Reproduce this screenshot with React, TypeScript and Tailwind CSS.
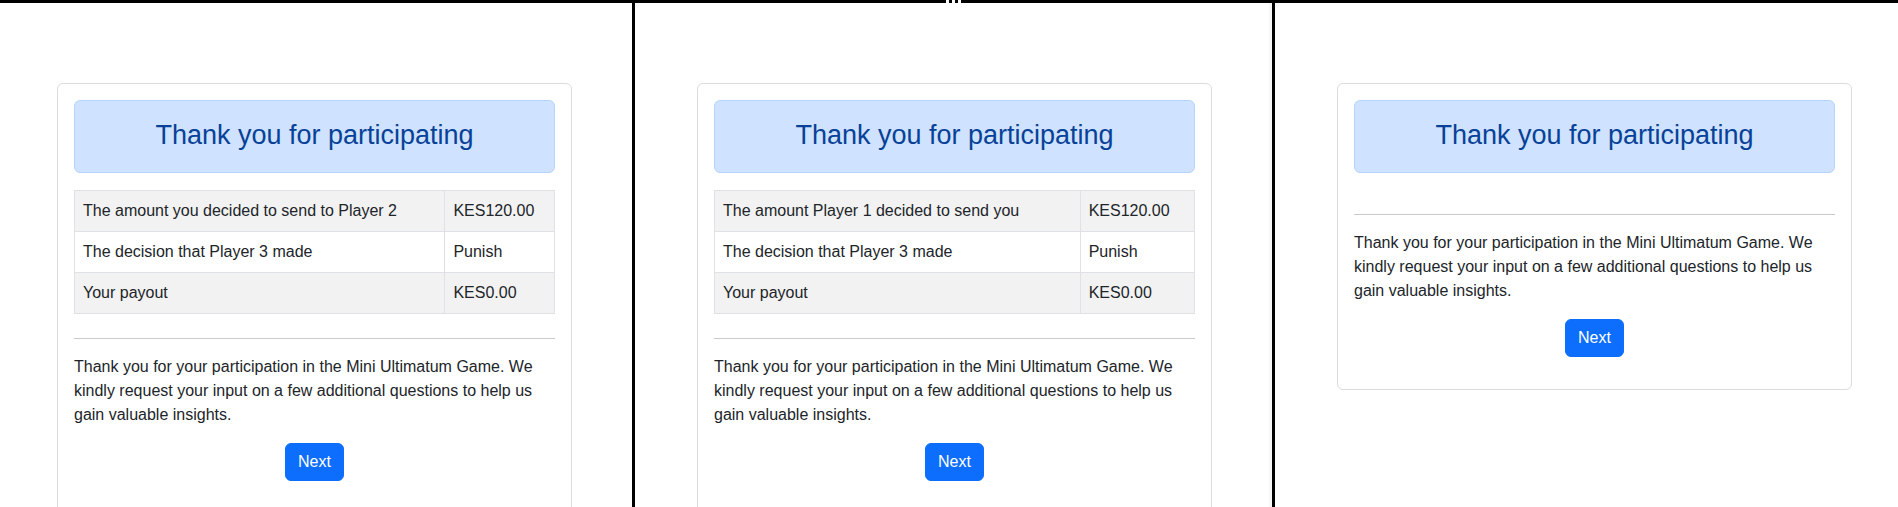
import React from 'react';

type Row = { label: string; value: string };

const sender: Row[] = [
  { label: 'The amount you decided to send to Player 2', value: 'KES120.00' },
  { label: 'The decision that Player 3 made', value: 'Punish' },
  { label: 'Your payout', value: 'KES0.00' },
];

const receiver: Row[] = [
  { label: 'The amount Player 1 decided to send you', value: 'KES120.00' },
  { label: 'The decision that Player 3 made', value: 'Punish' },
  { label: 'Your payout', value: 'KES0.00' },
];

function ResultCard({ rows }: { rows: Row[] }) {
  return (
    <div className="flex w-[515px] flex-col rounded-[6px] border border-[#dcdcdd] bg-white p-4">
      <div className="rounded-[6px] border border-[#b6d4fe] bg-[#cfe2ff] pt-[18px] pb-[21px] text-center text-[27px] leading-8 text-[#084298]">
        Thank you for participating
      </div>

      <div className="mt-[17px]">
        {rows.length > 0 && (
          <table className="w-full border-collapse">
            <tbody>
              {rows.map((row, i) => (
                <tr key={row.label} className={i % 2 === 0 ? 'bg-[#f2f2f2]' : 'bg-white'}>
                  <td className="border border-[#dee2e6] px-2 py-2">{row.label}</td>
                  <td className="border border-[#dee2e6] px-2 py-2 whitespace-nowrap">{row.value}</td>
                </tr>
              ))}
            </tbody>
          </table>
        )}
      </div>

      <div className="mt-[24px] mb-4 h-px bg-[#c9cacb]" />

      <p className="mb-4">
        Thank you for your participation in the Mini Ultimatum Game. We kindly request your input on a few
        additional questions to help us gain valuable insights.
      </p>

      <div className="mb-4 flex justify-center">
        <button className="rounded-[6px] border border-[#0d6efd] bg-[#0d6efd] px-3 py-[6px] leading-6 text-white">
          Next
        </button>
      </div>
    </div>
  );
}

export default function App() {
  return (
    <div className="flex h-[507px] w-[1898px] flex-col overflow-hidden bg-white font-['Liberation_Sans',Arial,sans-serif] text-[16px] leading-6 text-[#212529]">
      <div className="relative h-[3px] shrink-0 bg-black">
        <div className="absolute top-0 left-[946px] flex gap-[3px]">
          <span className="h-[3px] w-[3px] bg-white" />
          <span className="h-[3px] w-[3px] bg-white" />
          <span className="h-[3px] w-[3px] bg-white" />
        </div>
      </div>

      <div className="flex flex-1">
        <div className="w-[632px] shrink-0 pt-[80px] pl-[57px]">
          <ResultCard rows={sender} />
        </div>
        <div className="w-[3px] shrink-0 bg-black" />
        <div className="w-[637px] shrink-0 border-r-[3px] border-[#f7f7f7] pt-[80px] pl-[62px]">
          <ResultCard rows={receiver} />
        </div>
        <div className="w-[3px] shrink-0 bg-black" />
        <div className="flex-1 pt-[80px] pl-[62px]">
          <ResultCard rows={[]} />
        </div>
      </div>
    </div>
  );
}
